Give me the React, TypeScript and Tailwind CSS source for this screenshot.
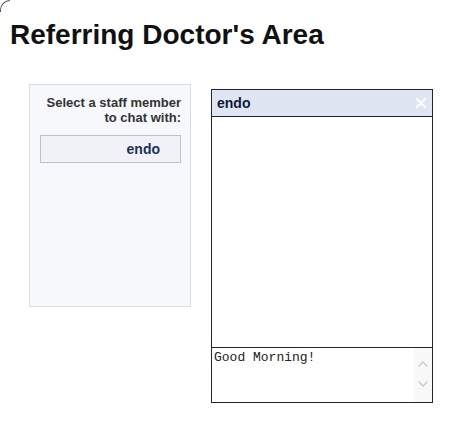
import { ChevronUp, ChevronDown, X } from 'lucide-react'

export default function App() {
  return (
    <div className="relative h-[435px] w-[471px] bg-white" style={{ fontFamily: '"Liberation Sans", Arial, sans-serif' }}>
      <div className="absolute left-0 top-0 h-[12px] w-[10px] rounded-tl-[10px] border-l border-t border-[#555]" />
      <h1 className="pl-[10px] pt-[17px] text-[28px] font-bold leading-[35px] text-[#111]">Referring Doctor's Area</h1>

      <div className="mt-[32px] flex items-start">
        <div className="ml-[29px] h-[223px] w-[162px] border border-[#d8dee8] bg-[#f7f8fb] pr-[9px] pt-[10px]">
          <p className="text-right text-[13px] font-bold leading-[15px] text-[#333]">
            Select a staff member
            <br />
            to chat with:
          </p>
          <button className="ml-[10px] mt-[10px] flex h-[28px] w-[141px] items-center justify-end border border-[#b9c1d3] bg-[#f0f2f7] pr-[20px] text-[14px] font-bold text-[#1f2f57]">
            endo
          </button>
        </div>

        <div className="ml-[20px] mt-[5px] flex h-[314px] w-[222px] flex-col border border-[#1c2540]">
          <div className="flex h-[27px] items-center justify-between border-b border-[#1c2540] bg-[#dfe5f1] pl-[5px] pr-[3px]">
            <span className="text-[14px] font-bold text-[#101a35]">endo</span>
            <X size={16} strokeWidth={3} className="text-white" />
          </div>
          <div className="flex-1 bg-white" />
          <div className="flex h-[55px] border-t border-[#1c2540] bg-white">
            <div className="flex-1 pl-[2px] pt-[2px] text-[13px] leading-[15px] text-[#222]" style={{ fontFamily: '"Liberation Mono", "Courier New", monospace' }}>
              Good Morning!
            </div>
            <div className="flex w-[18px] flex-col items-center gap-[4px] bg-[#f8f8f8] pt-[8px]">
              <ChevronUp size={16} className="text-[#c8c8c8]" />
              <ChevronDown size={16} className="text-[#c8c8c8]" />
            </div>
          </div>
        </div>
      </div>
    </div>
  )
}
